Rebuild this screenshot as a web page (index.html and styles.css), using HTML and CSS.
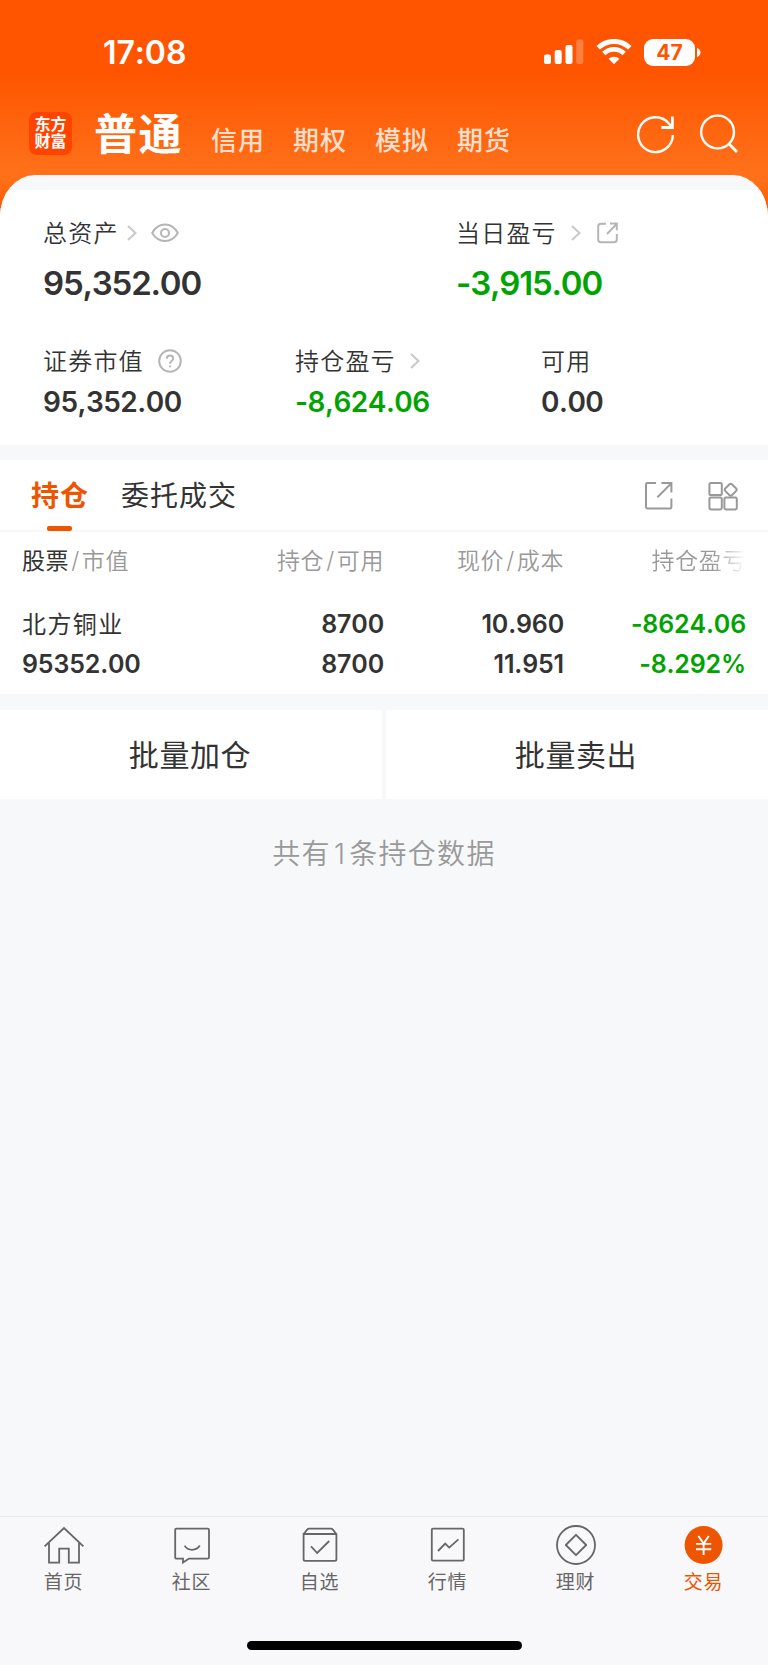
FILE: index.html
```html
<!DOCTYPE html>
<html lang="zh-CN">

<head>
    <meta charset="UTF-8">
    <meta name="viewport" content="width=device-width, initial-scale=1.0">
    <title>交易</title>
    <link rel="stylesheet" href="styles.css">
</head>

<body>
    <div class="header">
        <div class="status-bar">
            <span class="time">17:08</span>
            <div class="status-icons">
                <svg class="signal" width="40" height="26" viewBox="0 0 40 26" fill="#fff">
                    <rect x="0" y="15.5" width="7" height="9.5" rx="2" />
                    <rect x="10.7" y="11" width="7" height="14" rx="2" />
                    <rect x="21.5" y="6" width="7" height="19" rx="2" />
                    <rect x="32.3" y="0.5" width="7" height="24.5" rx="2" opacity="0.25" />
                </svg>
                <svg class="wifi" width="36" height="26" viewBox="0 0 36 26">
                    <path d="M2.2 8.8C11 0.3 25 0.3 33.8 8.8" fill="none" stroke="#fff" stroke-width="5" />
                    <path d="M7.8 14.5C13.6 9 22.4 9 28.2 14.5" fill="none" stroke="#fff" stroke-width="4.6" />
                    <path d="M18 25.3L12.6 19.8C15.4 17 20.6 17 23.4 19.8Z" fill="#fff" />
                </svg>
                <span class="battery">47</span>
                <svg class="battery-tip" width="4" height="9" viewBox="0 0 4 9" fill="#fff">
                    <path d="M0 0C4.6 1.4 4.6 7.6 0 9Z" />
                </svg>
            </div>
        </div>
        <div class="nav">
            <div class="logo">东方<br>财富</div>
            <span class="nav-active">普通</span>
            <span class="nav-item">信用</span>
            <span class="nav-item">期权</span>
            <span class="nav-item">模拟</span>
            <span class="nav-item">期货</span>
            <div class="nav-icons">
                <svg width="38" height="40" viewBox="0 0 38 40" fill="none" stroke="#fff" stroke-width="2.4">
                    <path d="M35.9 21A17.4 17.4 0 1 1 31.6 9.2L34.6 12.4" />
                    <path d="M24.4 13.5H35.4V2.5" stroke-width="2.8" />
                </svg>
                <svg width="38" height="40" viewBox="0 0 38 40" fill="none" stroke="#fff" stroke-width="2.4">
                    <circle cx="17.6" cy="18" r="16.4" />
                    <path d="M28.6 29.6L37 38" stroke-width="2.8" />
                </svg>
            </div>
        </div>
    </div>

    <div class="sheet">
        <div class="summary">
            <div class="summary-row main-row">
                <div class="item">
                    <div class="label"><span>总资产</span>
                        <svg class="arrow" width="10" height="16" viewBox="0 0 10 16"><path d="M1 1L8.5 8L1 15" /></svg>
                        <svg class="eye" width="28" height="20" viewBox="0 0 28 20">
                            <path d="M1.2 10C7.5-1.2 20.5-1.2 26.8 10C20.5 20.6 7.5 20.6 1.2 10Z" />
                            <circle cx="14" cy="10" r="4" />
                        </svg>
                    </div>
                    <div class="value">95,352.00</div>
                </div>
                <div class="item">
                    <div class="label"><span>当日盈亏</span>
                        <svg class="arrow arrow-far" width="10" height="16" viewBox="0 0 10 16"><path d="M1 1L8.5 8L1 15" /></svg>
                        <svg class="share" width="22" height="22" viewBox="0 0 22 22">
                            <path d="M9 1.8H4Q1.2 1.8 1.2 4.6V17.4Q1.2 20.2 4 20.2H17Q19.8 20.2 19.8 17.4V12" />
                            <path d="M10 12L19.6 2M13 1.6H19.8V8.2" />
                        </svg>
                    </div>
                    <div class="value green">-3,915.00</div>
                </div>
            </div>
            <div class="summary-row sub-row">
                <div class="item">
                    <div class="label"><span>证券市值</span>
                        <svg class="help" width="24" height="24" viewBox="0 0 24 24">
                            <circle cx="12" cy="12" r="10.8" />
                            <path d="M8.8 9.6Q8.9 6.4 12 6.4T15.2 9.4C15.2 11.6 12 11.8 12 14.8M12 16.4V18.2" />
                        </svg>
                    </div>
                    <div class="value">95,352.00</div>
                </div>
                <div class="item">
                    <div class="label"><span>持仓盈亏</span>
                        <svg class="arrow arrow-far" width="10" height="16" viewBox="0 0 10 16"><path d="M1 1L8.5 8L1 15" /></svg>
                    </div>
                    <div class="value green">-8,624.06</div>
                </div>
                <div class="item">
                    <div class="label"><span>可用</span></div>
                    <div class="value">0.00</div>
                </div>
            </div>
        </div>

        <div class="tabs">
            <span class="tab active">持仓</span>
            <span class="tab">委托成交</span>
            <div class="tab-icons">
                <svg width="30" height="30" viewBox="0 0 30 30">
                    <path d="M12 2H3.4Q2 2 2 3.4V26Q2 27.4 3.4 27.4H26Q27.4 27.4 27.4 26V17.4" />
                    <path d="M13.4 16.2L27 2.6M17.4 2H27.4V11.6" />
                </svg>
                <svg width="30" height="30" viewBox="0 0 30 30">
                    <rect x="1.4" y="2" width="12.4" height="12" rx="1.6" />
                    <rect x="1.4" y="16.4" width="12.4" height="12" rx="1.6" />
                    <rect x="16.4" y="16.4" width="12.4" height="12" rx="1.6" />
                    <rect x="18" y="4" width="9.4" height="9.4" rx="2" transform="rotate(45 22.7 8.7)" />
                </svg>
            </div>
        </div>

        <div class="table">
            <div class="row table-head">
                <span><b>股票</b><i>/</i>市值</span>
                <span>持仓<i>/</i>可用</span>
                <span>现价<i>/</i>成本</span>
                <span class="fade">持仓盈亏</span>
            </div>
            <div class="row first">
                <span class="name">北方铜业</span>
                <span>8700</span>
                <span>10.960</span>
                <span class="green">-8624.06</span>
            </div>
            <div class="row">
                <span>95352.00</span>
                <span>8700</span>
                <span>11.951</span>
                <span class="green">-8.292%</span>
            </div>
        </div>

        <div class="actions">
            <div class="action">批量加仓</div>
            <div class="action">批量卖出</div>
        </div>
        <p class="note">共有<span>1</span>条持仓数据</p>
    </div>

    <div class="tabbar">
        <div class="tabbar-items">
            <div class="tabbar-item">
                <svg width="42" height="42" viewBox="0 0 42 42">
                    <path d="M1.6 21.4L21 3L40.4 21.4M6 18V37.6H16.2V23.6H25.8V37.6H36V18" />
                </svg>
                <span>首页</span>
            </div>
            <div class="tabbar-item">
                <svg width="42" height="42" viewBox="0 0 42 42">
                    <path d="M5.6 3.6H36.6Q38 3.6 38 5V32.2Q38 33.6 36.6 33.6H18L12 37.6V33.6H5.6Q4.2 33.6 4.2 32.2V5Q4.2 3.6 5.6 3.6Z" />
                    <path d="M13.6 20.6C17 26.2 25.2 26.2 28.8 20.6" />
                </svg>
                <span>社区</span>
            </div>
            <div class="tabbar-item">
                <svg width="42" height="42" viewBox="0 0 42 42">
                    <path d="M4.6 9L8.4 4.4Q9 3.6 10 3.6H32Q33 3.6 33.6 4.4L37.4 9V34.2Q37.4 35.8 35.8 35.8H6.2Q4.6 35.8 4.6 34.2V9H37.4" />
                    <path d="M12 21.4L18.2 28L30.2 16" />
                </svg>
                <span>自选</span>
            </div>
            <div class="tabbar-item">
                <svg width="42" height="42" viewBox="0 0 42 42">
                    <rect x="4.8" y="3.6" width="32" height="32" rx="1.2" />
                    <path d="M11 26L18.2 18.6L22.2 22.6L31.4 14.4" />
                </svg>
                <span>行情</span>
            </div>
            <div class="tabbar-item">
                <svg width="42" height="42" viewBox="0 0 42 42">
                    <circle cx="21" cy="20" r="19" />
                    <path d="M21 9.8L31.2 20L21 30.2L10.8 20Z" stroke-linejoin="round" />
                </svg>
                <span>理财</span>
            </div>
            <div class="tabbar-item current">
                <svg width="42" height="42" viewBox="0 0 42 42">
                    <circle class="coin" cx="20.6" cy="20" r="19" />
                    <path class="yen" d="M15.4 11L20.6 18.6L25.8 11M13 18.9H28.2M13 24.2H28.2M20.6 18.6V30" />
                </svg>
                <span>交易</span>
            </div>
        </div>
        <div class="home-bar"></div>
    </div>
</body>

</html>
```
FILE: styles.css
```css
* {
    box-sizing: border-box;
}

body {
    margin: 0;
    width: 768px;
    height: 1665px;
    display: flex;
    flex-direction: column;
    font-family: Inter, 'Noto Sans CJK SC', sans-serif;
    font-kerning: none;
    color: #333;
    background: linear-gradient(#ff5500 0, #ff5500 72px, #ff7019 170px, #ff7019 180px, #ff5500 215px, #f6f8fa 218px);
    overflow: hidden;
}

svg {
    display: block;
    flex: none;
}

.header {
    height: 175px;
    color: #fff;
}

.status-bar {
    height: 104px;
    padding: 0 67px 0 103px;
    display: flex;
    align-items: center;
    justify-content: space-between;
}

.time {
    font-size: 32px;
    font-weight: 600;
    letter-spacing: -0.1px;
}

.status-icons {
    display: flex;
    align-items: center;
}

.signal {
    margin-right: 1px;
}

.wifi {
    margin: 0 12px 0 11px;
}

.battery {
    width: 51px;
    height: 27px;
    line-height: 27px;
    border-radius: 9px;
    background: #fff;
    color: #ff5500;
    font-size: 21px;
    font-weight: 700;
    text-align: center;
}

.battery-tip {
    margin-left: 2px;
}

.nav {
    height: 60px;
    padding: 0 30px 0 29px;
    display: flex;
    align-items: center;
}

.logo {
    width: 43px;
    height: 43px;
    margin-bottom: 1px;
    padding-top: 4px;
    border-radius: 8px;
    background: #ff4400;
    font-size: 16px;
    font-weight: 700;
    line-height: 17px;
    text-align: center;
}

.nav-active {
    margin: 0 28px 1px 22px;
    font-size: 43px;
    font-weight: 600;
    letter-spacing: 1.5px;
    line-height: 60px;
}

.nav-item {
    margin: 14px 28px 0 0;
    width: 54px;
    font-size: 26px;
    font-weight: 500;
    letter-spacing: 1px;
    line-height: 30px;
    color: #ffdfcc;
}

.nav-icons {
    margin-left: auto;
    display: flex;
    gap: 25px;
}

.sheet {
    flex: 1;
    padding-top: 15px;
    border-radius: 35px 35px 0 0 / 42px 42px 0 0;
    background: #f6f8fa;
    overflow: hidden;
}

.summary {
    height: 255px;
    padding: 25px 0 0 43px;
    background: #fff;
}

.summary-row {
    display: grid;
}

.main-row {
    grid-template-columns: 413px 1fr;
}

.sub-row {
    margin-top: 42px;
    grid-template-columns: 252px 246px 1fr;
}

.label {
    height: 36px;
    display: flex;
    align-items: center;
    font-size: 24px;
    letter-spacing: 1.2px;
    font-weight: 350;
}

.label span {
    margin-bottom: 3px;
}

.label svg {
    fill: none;
    stroke: #b5b5b5;
    stroke-width: 2;
}

.label .arrow {
    margin-left: 8px;
    stroke: #c8c8c8;
}

.label .arrow-far {
    margin-left: 14px;
}

.label .eye {
    margin-left: 14px;
}

.share {
    margin-left: 16px;
}

.help {
    margin-left: 14px;
}

.value {
    font-weight: 600;
}

.main-row .value {
    height: 50px;
    line-height: 64px;
    font-size: 33px;
    letter-spacing: -1.2px;
}

.sub-row .value {
    line-height: 46px;
    font-size: 28px;
    letter-spacing: -0.5px;
}

.green {
    color: #00a400;
}

.tabs {
    height: 72px;
    margin-top: 15px;
    padding: 0 30px 0 31px;
    display: flex;
    align-items: center;
    background: #fff;
    border-bottom: 2px solid #f6f8fa;
}

.tab {
    height: 72px;
    line-height: 74px;
    margin-right: 32px;
    font-size: 28px;
    letter-spacing: 1px;
}

.tab.active {
    color: #ee5500;
    font-weight: 600;
    position: relative;
}

.tab.active::after {
    content: '';
    position: absolute;
    left: 16px;
    bottom: 0;
    width: 25px;
    height: 5px;
    border-radius: 2px;
    background: #ee5500;
}

.tab-icons {
    margin-left: auto;
    padding-top: 2px;
    display: flex;
    gap: 34px;
    fill: none;
    stroke: #999;
    stroke-width: 2;
}

.table {
    height: 162px;
    padding: 0 22px;
    background: #fff;
}

.row {
    height: 40px;
    display: grid;
    grid-template-columns: 182px 180px 180px 182px;
    align-items: center;
    font-size: 25px;
    font-weight: 600;
    letter-spacing: -0.15px;
}

.row span {
    text-align: right;
}

.row span:first-child {
    text-align: left;
}

.table-head {
    height: 56px;
    padding-bottom: 3px;
    font-size: 23px;
    font-weight: 350;
    letter-spacing: 0.6px;
    color: #999;
}

.table-head b {
    font-weight: 400;
    color: #333;
}

.table-head i {
    font-style: normal;
    margin: 0 2px;
}

.row .fade {
    background: linear-gradient(90deg, #999 82%, #fff 100%);
    -webkit-background-clip: text;
    background-clip: text;
    color: transparent;
}

.row.first {
    height: 41px;
    margin-top: 15px;
}

.row .name {
    margin-bottom: 3px;
    font-size: 24px;
    font-weight: 400;
    letter-spacing: 1.4px;
}

.actions {
    margin-top: 16px;
    display: flex;
    gap: 4px;
}

.action {
    flex: 1;
    height: 89px;
    padding-right: 2px;
    line-height: 91px;
    background: #fff;
    font-size: 30px;
    letter-spacing: 0.6px;
    text-align: center;
}

.note {
    margin: 35px 0 0;
    font-size: 28px;
    line-height: 40px;
    letter-spacing: 1.3px;
    text-align: center;
    color: #999;
    font-weight: 350;
}

.note span {
    margin: 0 3px;
}

.tabbar {
    height: 149px;
    border-top: 1px solid #e8e8ea;
    background: #f8f8fb;
}

.tabbar-items {
    display: flex;
    padding-top: 8px;
}

.tabbar-item {
    flex: 1;
    display: flex;
    flex-direction: column;
    align-items: center;
    font-size: 19px;
    line-height: 28px;
    letter-spacing: 0.8px;
    color: #666;
}

.tabbar-item span {
    margin-right: 1px;
}

.tabbar-item svg {
    margin-bottom: 2px;
    fill: none;
    stroke: #666;
    stroke-width: 1.8;
}

.tabbar-item.current span {
    color: #ee5500;
}

.tabbar-item .coin {
    fill: #ee5500;
    stroke: none;
}

.tabbar-item .yen {
    stroke: #fff;
    stroke-width: 1.9;
}

.home-bar {
    width: 275px;
    height: 9px;
    margin: 44px auto 0;
    border-radius: 5px;
    background: #000;
}
```
